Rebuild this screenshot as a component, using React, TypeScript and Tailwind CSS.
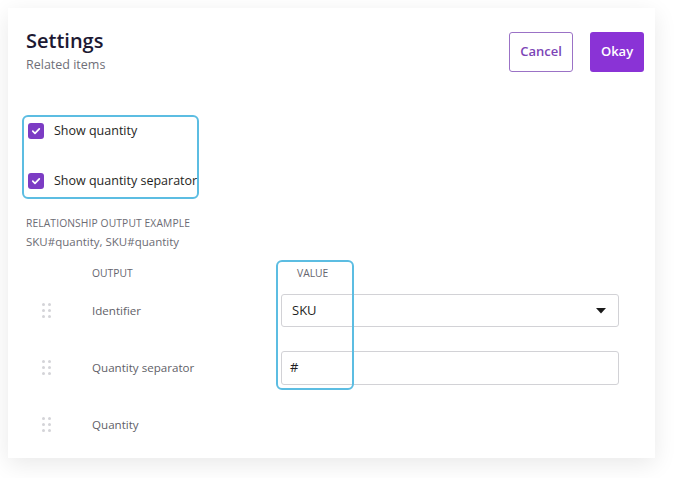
import React from 'react';

const font = { fontFamily: '"Open Sans", "Noto Sans", sans-serif' };

const Check = () => (
  <span className="w-[16px] h-[16px] rounded-[3px] bg-[#7c3cc4] flex items-center justify-center shrink-0">
    <svg width="10" height="10" viewBox="0 0 10 10" fill="none">
      <path d="M1.8 5.2 L4 7.3 L8.3 2.8" stroke="white" strokeWidth="1.7" strokeLinecap="round" strokeLinejoin="round" />
    </svg>
  </span>
);

const Handle = () => (
  <div className="grid grid-cols-2 gap-x-[3px] gap-y-[3px] w-[9px]">
    {[0, 1, 2, 3, 4, 5].map((i) => (
      <span key={i} className="w-[3px] h-[3px] rounded-full bg-[#d4d4d8]" />
    ))}
  </div>
);

const rows = [
  { label: 'Identifier', kind: 'select', value: 'SKU' },
  { label: 'Quantity separator', kind: 'input', value: '#' },
  { label: 'Quantity', kind: 'none', value: '' },
];

export default function App() {
  return (
    <div className="w-[688px] h-[478px] bg-white overflow-hidden" style={font}>
      <div className="relative ml-[8px] mt-[8px] w-[647px] h-[450px] bg-white shadow-[0_6px_22px_rgba(0,0,0,0.09)] pl-[18px] pr-[11px] pt-[20px]">
        {/* header */}
        <div className="flex items-start justify-between">
          <div>
            <h1 className="text-[20px] leading-[26px] font-semibold text-[#1c1933]">Settings</h1>
            <p className="mt-[2px] text-[12.5px] leading-[18px] text-[#6f6f78]">Related items</p>
          </div>
          <div className="flex gap-[17px] mt-[4px]">
            <button className="w-[64px] h-[40px] rounded-[3px] border-[1.5px] border-[#9b72c6] text-[13px] font-semibold text-[#7c45b6] bg-white">
              Cancel
            </button>
            <button className="w-[54px] h-[40px] rounded-[3px] bg-[#8a33d6] text-[13px] font-semibold text-white">
              Okay
            </button>
          </div>
        </div>

        {/* checkboxes */}
        <div className="mt-[41px] -ml-[4px] w-[177px] h-[84px] border-2 border-[#5cbde2] rounded-[6px] pl-[4px] pt-[2px] flex flex-col gap-[26px]">
          <label className="flex items-center h-[24px] gap-[10px] text-[12.5px] text-[#1f1f24] whitespace-nowrap">
            <Check />
            Show quantity
          </label>
          <label className="flex items-center h-[24px] gap-[10px] text-[12.5px] text-[#1f1f24] whitespace-nowrap">
            <Check />
            Show quantity separator
          </label>
        </div>

        {/* example */}
        <div className="mt-[17px] text-[10.3px] leading-[14px] text-[#6c6c74] tracking-[0.01em]">RELATIONSHIP OUTPUT EXAMPLE</div>
        <div className="mt-[4px] text-[11.5px] leading-[16px] text-[#6c6c74]">SKU#quantity, SKU#quantity</div>

        {/* table */}
        <div className="mt-[16px] flex h-[16px] items-center text-[10.3px] text-[#65656e]">
          <span className="ml-[66px] w-[205px]">OUTPUT</span>
          <span>VALUE</span>
        </div>
        <div className="mt-[12px] flex flex-col gap-[24px]">
          {rows.map((r) => (
            <div key={r.label} className="flex items-center h-[33px]">
              <div className="ml-[16px] w-[50px]">
                <Handle />
              </div>
              <span className="w-[189px] text-[11.6px] text-[#5f5f68]">{r.label}</span>
              {r.kind === 'select' && (
                <div className="w-[338px] h-[33px] border border-[#d2d2d6] rounded-[3px] flex items-center justify-between pl-[10px] pr-[12px] text-[13px] text-[#1f1f24]">
                  <span>{r.value}</span>
                  <svg width="10" height="6" viewBox="0 0 10 6">
                    <path d="M0 0 H10 L5 5.5 Z" fill="#1a1a1a" />
                  </svg>
                </div>
              )}
              {r.kind === 'input' && (
                <div className="w-[338px] h-[34px] border border-[#d2d2d6] rounded-[3px] flex items-center pl-[8px] text-[13px] text-[#1f1f24]">
                  {r.value}
                </div>
              )}
            </div>
          ))}
        </div>

        {/* annotation around value column */}
        <div className="absolute left-[268px] top-[252px] w-[78px] h-[130px] border-2 border-[#5cbde2] rounded-[6px] pointer-events-none" />
      </div>
    </div>
  );
}
